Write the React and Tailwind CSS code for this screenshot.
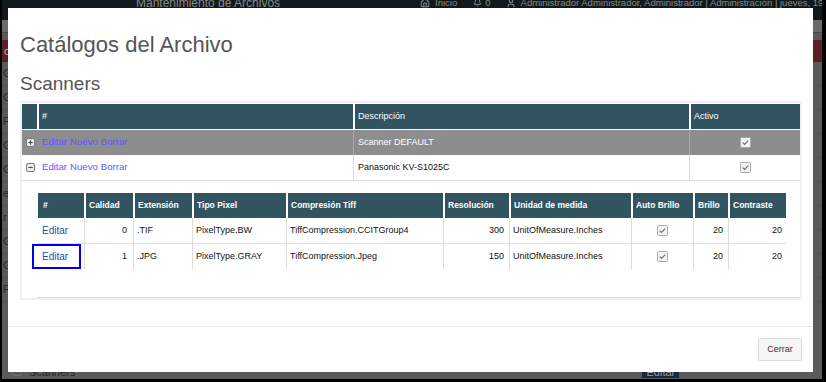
import React from 'react';
import { Home, Bell, User, Folder } from 'lucide-react';

const CheckBox = () => (
  <svg width="11" height="11" viewBox="0 0 11 11" className="block">
    <rect x="0.5" y="0.5" width="10" height="10" rx="1" fill="#f3f3f3" stroke="#a9a9a9" />
    <path d="M2.8 5.6 L4.6 7.3 L8.2 3.7" fill="none" stroke="#707070" strokeWidth="1.2" />
  </svg>
);

const Toggle = ({ open }) => (
  <svg width="9" height="9" viewBox="0 0 9 9" className="block">
    <rect x="0.5" y="0.5" width="8" height="8" rx="1.5" fill="#ececec" stroke="#7c7c7c" />
    <path d="M2.3 4.5 H6.7" stroke="#4a4a4a" strokeWidth="1.1" />
    {!open && <path d="M4.5 2.3 V6.7" stroke="#4a4a4a" strokeWidth="1.1" />}
  </svg>
);

const scanners = [
  { desc: 'Scanner DEFAULT', open: false },
  { desc: 'Panasonic KV-S1025C', open: true },
];

const settings = [
  { calidad: 0, ext: '.TIF', pixel: 'PixelType.BW', comp: 'TiffCompression.CCITGroup4', res: 300 },
  { calidad: 1, ext: '.JPG', pixel: 'PixelType.GRAY', comp: 'TiffCompression.Jpeg', res: 150, focus: true },
];

// only the first letter of each side menu row peeks out from behind the dialog
const sideRows = ['G', 'G', 'R', 'G', 'G', 'e', 'r', 'G', 'G', 'R'];

const App = () => {
  return (
    <div className="relative h-[382px] w-[826px] overflow-hidden bg-black pb-[3px] pl-[2px] pr-[4px] font-['Liberation_Sans',Arial,sans-serif]">
      {/* Dimmed page behind the dialog */}
      <div className="flex h-full flex-col bg-[#5a5a5a] text-[11px] text-[#262626]">
        <div className="flex h-[20px] shrink-0 items-start overflow-hidden whitespace-nowrap bg-[#12191c] text-[12px] leading-[12px] text-[#8a8a8a]">
          <span className="-mt-[3px] ml-[134px] shrink-0">Mantenimiento de Archivos</span>
          <div className="-mt-[3px] ml-[140px] flex shrink-0 items-start text-[9.5px] leading-[12px]">
            <Home size={10} strokeWidth={2.5} className="mt-[1px]" />
            <span className="ml-[5px]">Inicio</span>
            <Bell size={9} strokeWidth={2.5} className="ml-[16px] mt-[1px]" />
            <span className="ml-[3px]">0</span>
            <User size={10} strokeWidth={2.5} className="ml-[15px] mt-[1px]" />
            <span className="ml-[5px]">Administrador Administrador, Administrador | Administración | jueves, 19 de diciembre</span>
          </div>
        </div>
        <div className="h-[12px] shrink-0 bg-[#6a6a6a]" />
        <div className="h-[8px] shrink-0 border-t border-[#4b4b4b]" />
        <div className="flex h-[22px] shrink-0 items-center bg-[#5e1f1f] pl-[2px] text-[#b9b9b9]">o</div>
        <div className="flex flex-col">
          {sideRows.map((r, i) => (
            <div key={i} className="flex h-[24px] items-center border-b border-[#525252] pl-[1px]">
              {r}
            </div>
          ))}
        </div>
        <div className="mt-auto flex h-[16px] shrink-0 items-end pb-[1px]">
          <Folder size={10} className="mb-[1px] ml-[10px] text-[#8a7a2a]" />
          <span className="ml-[7px] leading-[12px]">Scanners</span>
          <span className="ml-[567px] bg-[#1f2442] px-[4px] leading-[12px] text-[#9a9aaa]">Editar</span>
        </div>
      </div>

      {/* Dialog */}
      <div className="absolute left-[8px] top-[8px] flex h-[364px] w-[805px] flex-col bg-white">
        <div className="pl-[12px] pr-[11px] pt-[24px] pb-[26px]">
          <h1 className="text-[22px] leading-[26px] text-[#555]">Catálogos del Archivo</h1>
          <h2 className="mt-[15px] text-[19px] leading-[22px] text-[#555]">Scanners</h2>

          <div className="mt-[6px] border-2 border-[#f0f0f0] pt-[1px]">
            {/* Header */}
            <div className="grid h-[26px] grid-cols-[15px_316px_336px_111px] border-b border-white bg-[#325461] text-[9px] text-white">
              <div />
              <div className="flex items-center border-l-2 border-white pl-[3px]">#</div>
              <div className="flex items-center border-l-2 border-white pl-[3px]">Descripción</div>
              <div className="flex items-center border-l-2 border-white pl-[3px]">Activo</div>
            </div>

            {scanners.map((s, i) => (
              <div
                key={i}
                className={
                  s.open
                    ? 'grid h-[26px] grid-cols-[15px_316px_336px_111px] border-b border-[#dddddd] bg-white text-[9px] text-[#111]'
                    : 'grid h-[25px] grid-cols-[15px_316px_336px_111px] bg-[#8d8d8d] text-[9px] text-white'
                }
              >
                <div className="flex items-center justify-center pl-[1px]">
                  <Toggle open={s.open} />
                </div>
                <div className="flex items-center gap-[3px] pl-[5px] text-[9.6px] text-[#5a5aff]">
                  <span>Editar</span>
                  <span>Nuevo</span>
                  <span>Borrar</span>
                </div>
                <div className={s.open ? 'flex items-center border-l border-[#dddddd] pl-[4px]' : 'flex items-center border-l border-[#a9a9a9] pl-[4px]'}>
                  {s.desc}
                </div>
                <div className={s.open ? 'flex items-center justify-center border-l border-[#dddddd]' : 'flex items-center justify-center border-l border-[#a9a9a9]'}>
                  <CheckBox />
                </div>
              </div>
            ))}

            {/* Detail of the open scanner */}
            <div className="grid grid-cols-[15px_763px]">
              <div />
              <div className="border-b border-[#dddddd] pb-[28px] pl-[1px] pt-[12px]">
                <div className="w-[748px] text-[9px] text-[#111]">
                  <div className="grid h-[25px] grid-cols-[46px_49px_59px_94px_157px_66px_122px_62px_35px_58px] bg-[#325461] text-[8.5px] font-bold text-white">
                    <div className="flex items-center pl-[5px]">#</div>
                    <div className="flex items-center border-l-2 border-white pl-[3px]">Calidad</div>
                    <div className="flex items-center border-l-2 border-white pl-[3px]">Extensión</div>
                    <div className="flex items-center border-l-2 border-white pl-[3px]">Tipo Pixel</div>
                    <div className="flex items-center border-l-2 border-white pl-[3px]">Compresión Tiff</div>
                    <div className="flex items-center border-l-2 border-white pl-[3px]">Resolución</div>
                    <div className="flex items-center border-l-2 border-white pl-[3px]">Unidad de medida</div>
                    <div className="flex items-center border-l-2 border-white pl-[3px]">Auto Brillo</div>
                    <div className="flex items-center border-l-2 border-white pl-[3px]">Brillo</div>
                    <div className="flex items-center border-l-2 border-white pl-[3px]">Contraste</div>
                  </div>
                  {settings.map((r, i) => (
                    <div
                      key={i}
                      className={
                        i === 0
                          ? 'grid h-[26px] grid-cols-[46px_49px_59px_94px_157px_66px_122px_62px_35px_58px] border-b border-[#dddddd]'
                          : 'grid h-[25px] grid-cols-[46px_49px_59px_94px_157px_66px_122px_62px_35px_58px]'
                      }
                    >
                      <div className="relative flex items-center pl-[4px] text-[10px] text-[#2150a6]">
                        Editar
                        {r.focus && (
                          <span className="absolute -left-[6px] top-0 h-[25px] w-[49px] border-2 border-[#0000ee]" />
                        )}
                      </div>
                      <div className="flex items-center justify-end border-l border-[#dddddd] pr-[6px]">{r.calidad}</div>
                      <div className="flex items-center border-l border-[#dddddd] pl-[3px]">{r.ext}</div>
                      <div className="flex items-center border-l border-[#dddddd] pl-[3px]">{r.pixel}</div>
                      <div className="flex items-center border-l border-[#dddddd] pl-[3px]">{r.comp}</div>
                      <div className="flex items-center justify-end border-l border-[#dddddd] pr-[5px]">{r.res}</div>
                      <div className="flex items-center border-l border-[#dddddd] pl-[3px]">UnitOfMeasure.Inches</div>
                      <div className="flex items-center justify-center border-l border-[#dddddd]">
                        <CheckBox />
                      </div>
                      <div className="flex items-center justify-end border-l border-[#dddddd] pr-[5px]">20</div>
                      <div className="flex items-center justify-end border-l border-[#dddddd] pr-[4px]">20</div>
                    </div>
                  ))}
                </div>
              </div>
            </div>
          </div>
        </div>

        <div className="flex justify-end border-t border-[#e8e8e8] pb-[11px] pr-[11px] pt-[11px]">
          <button className="h-[23px] w-[44px] rounded-[2px] border border-[#dcdcdc] bg-[#f6f6f6] text-[9px] text-[#333]">
            Cerrar
          </button>
        </div>
      </div>
    </div>
  );
};

export default App;
